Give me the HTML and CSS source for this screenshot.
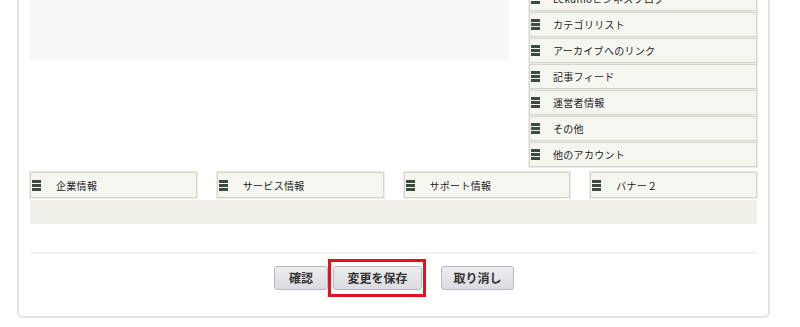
FILE: index.html
```html
<!DOCTYPE html>
<html lang="ja">
<head>
<meta charset="utf-8">
<link rel="stylesheet" href="styles.css">
</head>
<body>
<div class="card">
  <div class="top-row">
    <div class="main">
      <div class="main-box"></div>
    </div>
    <ul class="sidebar">
      <li class="item"><span class="handle"></span><span class="label">Lekumoビジネスブログ</span></li>
      <li class="item"><span class="handle"></span><span class="label">カテゴリリスト</span></li>
      <li class="item"><span class="handle"></span><span class="label">アーカイブへのリンク</span></li>
      <li class="item"><span class="handle"></span><span class="label">記事フィード</span></li>
      <li class="item"><span class="handle"></span><span class="label">運営者情報</span></li>
      <li class="item"><span class="handle"></span><span class="label">その他</span></li>
      <li class="item"><span class="handle"></span><span class="label">他のアカウント</span></li>
    </ul>
  </div>
  <ul class="bottom-row">
    <li class="item wide"><span class="handle"></span><span class="label">企業情報</span></li>
    <li class="item wide"><span class="handle"></span><span class="label">サービス情報</span></li>
    <li class="item wide"><span class="handle"></span><span class="label">サポート情報</span></li>
    <li class="item wide"><span class="handle"></span><span class="label">バナー２</span></li>
  </ul>
  <div class="band"></div>
  <div class="rule"></div>
  <div class="actions">
    <button class="btn btn-confirm">確認</button>
    <span class="highlight"><button class="btn btn-save">変更を保存</button></span>
    <button class="btn btn-cancel">取り消し</button>
  </div>
</div>
</body>
</html>
```

FILE: styles.css
```css
* { box-sizing: border-box; }
html, body { margin: 0; padding: 0; background: #fff; }
body {
  font-family: "Noto Sans CJK JP", "Noto Sans", sans-serif;
  color: #222;
  overflow: hidden;
}
ul { list-style: none; margin: 0; padding: 0; }

.card {
  margin: -16px 0 0 17px;
  width: 753px;
  border: 2px solid #e3e3e3;
  border-radius: 0 0 6px 6px;
  padding: 0 11px 19px 11px;
}

.top-row {
  display: flex;
  gap: 20px;
}
.main { width: 479px; }
.main-box {
  height: 75px;
  background: #f7f7f7;
}
.sidebar {
  width: 228px;
}

.item {
  display: flex;
  align-items: center;
  height: 25px;
  margin-bottom: 1px;
  background: #f6f6f1;
  border: 1px solid #d5d5cd;
  box-shadow: 0 0 0 1px #ecece6;
  font-size: 10px;
  line-height: 1;
  white-space: nowrap;
  overflow: hidden;
}
.handle {
  flex: none;
  width: 9px;
  height: 11px;
  margin-left: 1px;
  background: linear-gradient(#3d4a3e 0 3px, transparent 3px 4px, #3d4a3e 4px 7px, transparent 7px 8px, #3d4a3e 8px 11px);
}
.label {
  margin-left: 13px;
  padding-top: 1px;
  letter-spacing: 0.3px;
}

.bottom-row {
  display: grid;
  grid-template-columns: repeat(4, 1fr);
  gap: 20px;
  margin-top: 4px;
}
.item.wide {
  height: 26px;
  margin-bottom: 0;
}
.item.wide .label { margin-left: 15px; }

.band {
  margin-top: 2px;
  height: 24px;
  background: #f0efe8;
}
.rule {
  margin-top: 28px;
  height: 2px;
  background: #f1f1f1;
}

.actions {
  display: flex;
  justify-content: center;
  align-items: center;
  padding-top: 5px;
  padding-left: 1px;
}
.btn {
  height: 24px;
  border: 1px solid #b9b9c1;
  border-radius: 3px;
  background: linear-gradient(#ededf1, #dadae0);
  font-family: "Noto Sans CJK JP", sans-serif;
  font-size: 12px;
  font-weight: 700;
  color: #333;
  padding: 0;
  line-height: 22px;
}
.btn-confirm { width: 54px; }
.btn-save { width: 89px; }
.btn-cancel { width: 73px; margin-left: 15px; }
.highlight {
  display: inline-flex;
  border: 3px solid #e8101c;
  padding: 4px 1px 4px 2px;
}
```
